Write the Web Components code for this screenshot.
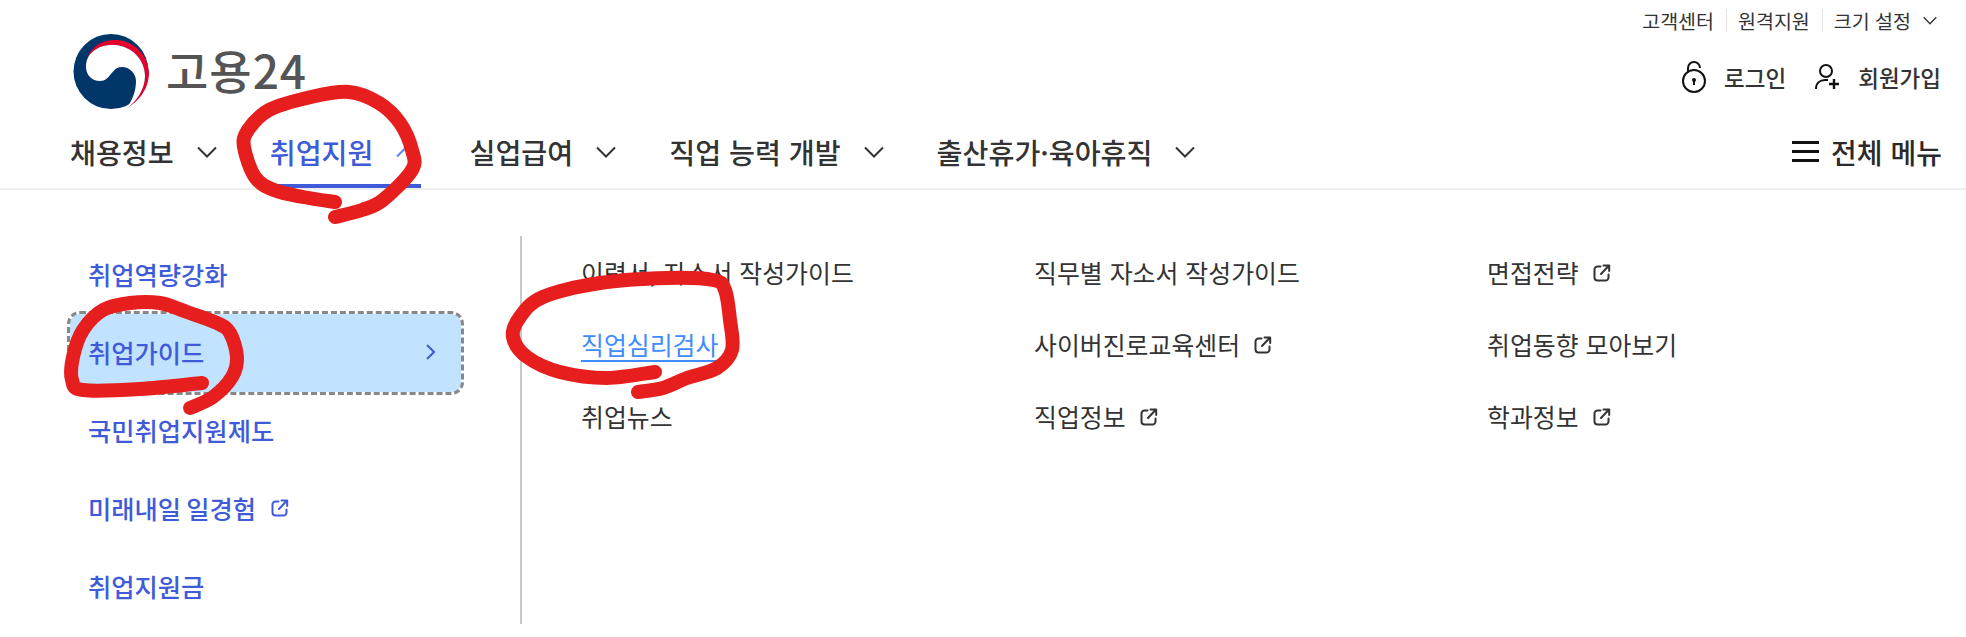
<!DOCTYPE html>
<html lang="ko">
<head>
<meta charset="utf-8">
<title>고용24</title>
<style>
html,body{margin:0;background:#fff;}
body{position:relative;width:1966px;height:637px;overflow:hidden;font-family:"Noto Sans CJK KR","Noto Sans",sans-serif;color:#333;}
</style>
</head>
<body>
<site-header></site-header>
<mega-menu></mega-menu>
<scribble-layer></scribble-layer>
<script>
const EXT = `<svg viewBox="0 0 18 18" width="18" height="18" fill="none" stroke="currentColor" stroke-width="2" stroke-linecap="round" stroke-linejoin="round"><path d="M7.5 2.5H4.5a3 3 0 0 0-3 3v8a3 3 0 0 0 3 3h8a3 3 0 0 0 3-3v-3"/><path d="M8 10l8-8.5M10.5 1.5H16.2V7"/></svg>`;
const CHEV = `<svg viewBox="0 0 20 12" width="20" height="12" fill="none" stroke="currentColor" stroke-width="2"><path d="M1 1.5l9 9 9-9"/></svg>`;

class SiteHeader extends HTMLElement{
  constructor(){
    super();
    const items=[["채용정보",0],["취업지원",1],["실업급여",0],["직업 능력 개발",0],["출산휴가·육아휴직",0]];
    this.attachShadow({mode:"open"}).innerHTML=`
    <style>
    :host{display:block;font-family:"Noto Sans CJK KR","Noto Sans",sans-serif;color:#333;white-space:nowrap;}
    .top{display:flex;justify-content:space-between;height:115px;padding:0 24px 0 73px;}
    .logo{display:flex;align-items:center;gap:17px;height:75px;margin-top:34px;}
    .logo svg{display:block;}
    .logo span{font-size:46px;font-weight:500;color:#555;line-height:1;letter-spacing:1px;margin-top:-5px;}
    .right{display:flex;flex-direction:column;align-items:flex-end;}
    .util{display:flex;align-items:center;height:40px;font-size:19.5px;color:#333;padding-right:5px;}
    .util a{display:flex;align-items:center;gap:12px;padding:0 12px;position:relative;}
    .util a+a::before{content:"";position:absolute;left:0;top:3px;bottom:3px;width:1px;background:#e3e3e3;}
    .util a:last-child{padding-right:0;}
    .util svg{width:14px;height:9px;}
    .auth{display:flex;align-items:center;gap:29px;height:74px;font-size:22.5px;font-weight:500;padding-right:1px;}
    .auth a{display:flex;align-items:center;gap:18px;}
    nav{display:flex;align-items:stretch;gap:48px;height:73px;padding:0 24px 0 70px;border-bottom:2px solid #eee;font-size:28.2px;font-weight:500;}
    .item{display:flex;align-items:center;position:relative;}
    .item .t{display:block;}
    .item .c{display:flex;width:48px;padding-left:23px;box-sizing:border-box;color:#333;}
    .item.on{color:#3f5bd9;}
    .item.on .c{color:#5c82f2;}
    .item.on .c svg{transform:scaleY(-1);}
    .item.on::after{content:"";position:absolute;left:0;right:0;bottom:0;height:4px;background:#3f5bd9;}
    .all{margin-left:auto;display:flex;align-items:center;gap:12px;color:#2a2a2a;font-size:28px;}
    .ham{display:flex;flex-direction:column;justify-content:space-between;width:27px;height:21px;}
    .ham i{display:block;height:3px;background:#111;}
    </style>
    <div class="top">
      <a class="logo">
        <svg width="76" height="75" viewBox="0 0 76 75">
          <circle cx="38" cy="37.5" r="37.5" fill="#003668"/>
          <path d="M13 33C13 15 28 5 44 6C62 7 76 22 76 40C76 54 66 68 53 75C64 67 72 55 72 42C72 25 58 12 42 11C28 10 13 17 13 33Z" fill="#e3002c"/>
          <path d="M13 33C13 17 28 10 42 11C58 12 72 25 72 42C72 55 64 67 53 75C60 66 63 56 63 47C63 39 56 33 49 33C38 33 38 47 27 47C19 47 13 41 13 33Z" fill="#fff"/>
          <path d="M76 40C76 54 66 68 53 75L76 75Z" fill="#fff"/>
        </svg>
        <span>고용24</span>
      </a>
      <div class="right">
        <div class="util">
          <a>고객센터</a><a>원격지원</a><a>크기 설정 ${CHEV}</a>
        </div>
        <div class="auth">
          <a><svg width="24" height="32" viewBox="0 0 24 32" fill="none" stroke="#111" stroke-width="2"><circle cx="12" cy="20" r="11"/><path d="M6 11V7a6 6 0 0 1 12 0"/><circle cx="12" cy="19" r="2" fill="#111" stroke="none"/><path d="M12 20v4"/></svg>로그인</a>
          <a><svg width="25" height="26" viewBox="0 0 25 26" fill="none" stroke="#111" stroke-width="2"><circle cx="11" cy="7" r="6"/><path d="M1 25c0-6 4-9 9-9h3"/><path d="M19 15v10M14 20h10" stroke-width="2.4"/></svg>회원가입</a>
        </div>
      </div>
    </div>
    <nav>
      ${items.map(([t,on])=>`<a class="item${on?" on":""}"><span class="t">${t}</span><span class="c">${CHEV}</span></a>`).join("")}
      <a class="all"><span class="ham"><i></i><i></i><i></i></span>전체 메뉴</a>
    </nav>`;
  }
}
customElements.define("site-header",SiteHeader);

class SideItem extends HTMLElement{
  constructor(){
    super();
    this.attachShadow({mode:"open"}).innerHTML=`
    <style>
    :host{display:flex;align-items:center;justify-content:space-between;height:78px;box-sizing:border-box;padding:0 26px 3px 18px;font-size:25.3px;word-spacing:-2px;font-weight:500;color:#3f5bd9;border-radius:10px;white-space:nowrap;}
    :host([active]){background:#c1e3ff;outline:3px dashed #888;}
    .l{display:flex;align-items:center;gap:15px;}
    svg{display:block;}
    .ch{display:none;}
    :host([active]) .ch{display:block;}
    .ex{display:none;}
    :host([external]) .ex{display:block;}
    </style>
    <span class="l"><slot></slot><span class="ex">${EXT}</span></span>
    <svg class="ch" width="9" height="16" viewBox="0 0 9 16" fill="none" stroke="currentColor" stroke-width="2"><path d="M1 1l7 7-7 7"/></svg>`;
  }
}
customElements.define("side-item",SideItem);

class SubLink extends HTMLElement{
  constructor(){
    super();
    this.attachShadow({mode:"open"}).innerHTML=`
    <style>
    :host{display:flex;align-items:center;gap:14px;height:72px;box-sizing:border-box;padding-bottom:2px;font-size:24.9px;color:#333;white-space:nowrap;}
    :host([current]){color:#3f8cff;}
    :host([current]) .t{text-decoration:underline;text-underline-offset:5px;text-decoration-thickness:2px;}
    .ex{display:none;color:#333;position:relative;top:1px;}
    :host([external]) .ex{display:block;}
    svg{display:block;}
    </style>
    <span class="t"><slot></slot></span><span class="ex">${EXT}</span>`;
  }
}
customElements.define("sub-link",SubLink);

class MegaMenu extends HTMLElement{
  constructor(){
    super();
    this.attachShadow({mode:"open"}).innerHTML=`
    <style>
    :host{display:flex;align-items:flex-start;padding:46px 0 0 70px;font-family:"Noto Sans CJK KR","Noto Sans",sans-serif;}
    .side{width:391px;margin-right:59px;}
    .panel{display:grid;grid-template-columns:repeat(3,453px);grid-auto-rows:72px;height:388px;padding:1px 0 0 59px;border-left:2px solid #c8c8c8;box-sizing:border-box;align-content:start;}
    </style>
    <div class="side">
      <side-item>취업역량강화</side-item>
      <side-item active>취업가이드</side-item>
      <side-item>국민취업지원제도</side-item>
      <side-item external>미래내일 일경험</side-item>
      <side-item>취업지원금</side-item>
    </div>
    <div class="panel">
      <sub-link>이력서, 자소서 작성가이드</sub-link>
      <sub-link>직무별 자소서 작성가이드</sub-link>
      <sub-link external>면접전략</sub-link>
      <sub-link current>직업심리검사</sub-link>
      <sub-link external>사이버진로교육센터</sub-link>
      <sub-link>취업동향 모아보기</sub-link>
      <sub-link>취업뉴스</sub-link>
      <sub-link external>직업정보</sub-link>
      <sub-link external>학과정보</sub-link>
    </div>`;
  }
}
customElements.define("mega-menu",MegaMenu);

function smooth(p){
  let d=`M${p[0][0]} ${p[0][1]}`;
  for(let i=0;i<p.length-1;i++){
    const a=p[Math.max(i-1,0)],b=p[i],c=p[i+1],e=p[Math.min(i+2,p.length-1)];
    d+=`C${(b[0]+(c[0]-a[0])/6).toFixed(1)} ${(b[1]+(c[1]-a[1])/6).toFixed(1)} ${(c[0]-(e[0]-b[0])/6).toFixed(1)} ${(c[1]-(e[1]-b[1])/6).toFixed(1)} ${c[0]} ${c[1]}`;
  }
  return d;
}
class ScribbleLayer extends HTMLElement{
  constructor(){
    super();
    const marks=[
      [[335,217],[362,210],[383,200],[412,170],[412,150],[400,123],[379,103],[349,92],[311,97],[269,110],[248,130],[244,147],[255,177],[274,190],[303,197],[335,202]],
      [[190,408],[213,397],[232,377],[237,357],[230,333],[217,323],[187,312],[160,303],[130,303],[103,310],[83,330],[73,357],[72,380],[83,390],[140,389],[202,383]],
      [[638,392],[663,388],[687,378],[717,368],[732,350],[730,320],[725,290],[713,280],[667,278],[600,283],[543,297],[520,317],[513,337],[527,357],[560,372],[607,378],[655,372]]
    ];
    this.attachShadow({mode:"open"}).innerHTML=`
    <style>:host{position:absolute;inset:0;pointer-events:none;display:block;}svg{display:block;}</style>
    <svg width="1966" height="637" fill="none" stroke="#e61e1e" stroke-width="14" stroke-linecap="round" stroke-linejoin="round">
      ${marks.map(m=>`<path d="${smooth(m)}"/>`).join("")}
    </svg>`;
  }
}
customElements.define("scribble-layer",ScribbleLayer);
</script>
</body>
</html>
